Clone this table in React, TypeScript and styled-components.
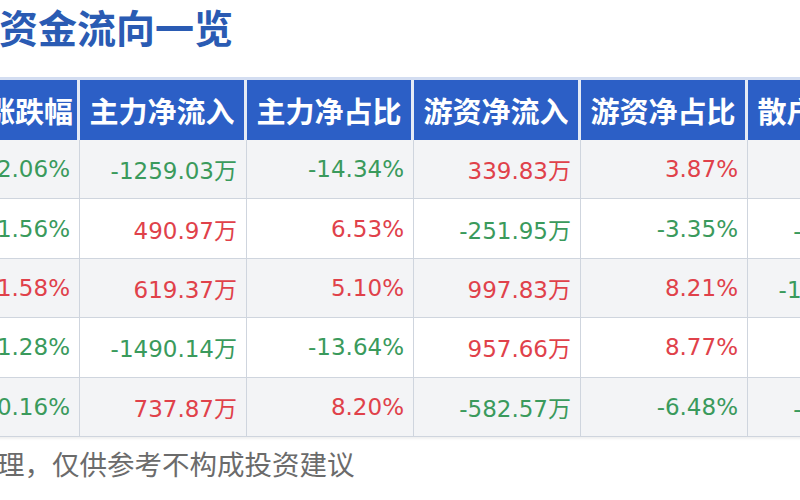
import React from 'react';
import styled, { createGlobalStyle } from 'styled-components';

type Row = string[];

const headers = ['涨跌幅', '主力净流入', '主力净占比', '游资净流入', '游资净占比', '散户净流入'];

const rows: Row[] = [
  ['-2.06%', '-1259.03万', '-14.34%', '339.83万', '3.87%', '919.20万'],
  ['-1.56%', '490.97万', '6.53%', '-251.95万', '-3.35%', '-239.02万'],
  ['1.58%', '619.37万', '5.10%', '997.83万', '8.21%', '-1617.20万'],
  ['-1.28%', '-1490.14万', '-13.64%', '957.66万', '8.77%', '532.48万'],
  ['-0.16%', '737.87万', '8.20%', '-582.57万', '-6.48%', '-155.30万'],
];

const App: React.FC = () => {
  return (
    <Page>
      <GlobalStyle />
      <Title>资金流向一览</Title>
      <Table>
        <HeaderRow>
          {headers.map((h) => (
            <HeaderCell key={h}>{h}</HeaderCell>
          ))}
        </HeaderRow>
        {rows.map((row, i) => (
          <DataRow key={i} striped={i % 2 === 0}>
            {row.map((value, j) => (
              <Cell key={j} negative={value.startsWith('-')}>
                {value}
              </Cell>
            ))}
          </DataRow>
        ))}
      </Table>
      <Footer>据整理，仅供参考不构成投资建议</Footer>
    </Page>
  );
};

export default App;

const GlobalStyle = createGlobalStyle`
  html, body {
    margin: 0;
    padding: 0;
    background: #ffffff;
  }
`;

const Page = styled.div`
  width: 800px;
  height: 500px;
  overflow: hidden;
  background: #ffffff;
  font-family: 'Noto Sans CJK SC', sans-serif;
`;

const Title = styled.h1`
  margin: 7px 0 0 -1px;
  font-size: 39px;
  line-height: 1;
  font-weight: 700;
  color: #2a5bb3;
  white-space: nowrap;
`;

const Table = styled.div`
  margin: 31px 0 0 -30px;
  width: 945px;
  box-shadow: 0 2px 2px rgba(0, 0, 0, 0.06);
`;

const columns = '110px repeat(5, 167px)';

const HeaderRow = styled.div`
  display: grid;
  grid-template-columns: ${columns};
  height: 63px;
  border-top: 3px solid #d3ddf1;
  box-sizing: border-box;
  background: #e4eaf6;
`;

const HeaderCell = styled.div`
  display: flex;
  align-items: center;
  justify-content: center;
  margin-right: 3px;
  background: #2c5fc6;
  color: #ffffff;
  font-size: 29px;
  font-weight: 700;
  white-space: nowrap;
  overflow: hidden;

  &:first-child {
    justify-content: flex-end;
    padding-right: 4px;
  }
`;

type DataRowProps = {
  striped: boolean;
};

const DataRow = styled.div<DataRowProps>`
  display: grid;
  grid-template-columns: ${columns};
  height: 59.4px;
  box-sizing: border-box;
  border-bottom: 1px solid #cfd5de;
  background: ${(props) => (props.striped ? '#f3f4f6' : '#ffffff')};
`;

type CellProps = {
  negative: boolean;
};

const Cell = styled.div<CellProps>`
  display: flex;
  align-items: center;
  justify-content: flex-end;
  padding-right: 9px;
  border-right: 1px solid #cfd5de;
  font-family: 'DejaVu Sans', 'Noto Sans CJK SC', sans-serif;
  font-size: 23px;
  color: ${(props) => (props.negative ? '#3a9a5c' : '#e0414a')};
  white-space: nowrap;
  overflow: visible;
`;

const Footer = styled.div`
  margin: 13px 0 0 -58px;
  font-size: 27.5px;
  line-height: 1;
  color: #6b6b6b;
  white-space: nowrap;
`;
